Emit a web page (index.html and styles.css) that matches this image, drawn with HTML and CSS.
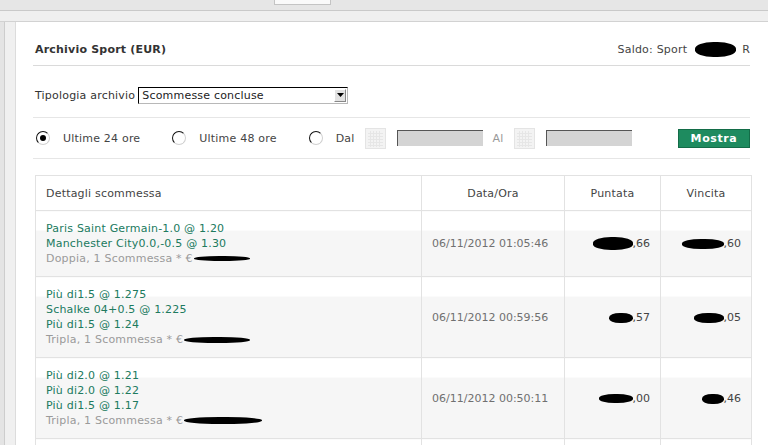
FILE: index.html
```html
<!DOCTYPE html>
<html lang="it">
<head>
    <meta charset="UTF-8">
    <meta name="viewport" content="width=device-width, initial-scale=1.0">
    <title>Archivio Sport</title>
    <link rel="stylesheet" href="styles.css">
</head>
<body>

    <div id="topbar">
        <div class="tab"></div>
    </div>
    <div id="subbar"></div>

    <div id="frame">
        <div class="panel">

            <div class="panel-head">
                <div class="title">Archivio Sport (EUR)</div>
                <div class="saldo">Saldo: Sport <span class="blot blot-saldo"></span>R</div>
            </div>

            <div class="filter-row">
                <label>Tipologia archivio</label>
                <div class="select">
                    <span>Scommesse concluse</span>
                    <span class="select-arrow">
                        <svg width="7" height="4" viewBox="0 0 7 4"><path d="M0 0h7L3.5 4z" fill="#000"/></svg>
                    </span>
                </div>
            </div>

            <div class="period-row">
                <span class="radio checked"></span>
                <span class="period-label">Ultime 24 ore</span>
                <span class="radio"></span>
                <span class="period-label">Ultime 48 ore</span>
                <span class="radio"></span>
                <span class="period-label dal">Dal</span>
                <span class="calendar">
                    <svg width="21" height="21" viewBox="0 0 21 21">
                        <rect x="0.5" y="0.5" width="20" height="20" fill="#f3f3f3" stroke="#e4e4e4"/>
                        <path d="M3 5.5h15M3 8.5h15M3 11.5h15M3 14.5h15M3 17.5h15M5.5 3v16M8.5 3v16M11.5 3v16M14.5 3v16" stroke="#e6e6e6" stroke-width="1"/>
                    </svg>
                </span>
                <span class="date-input"></span>
                <span class="period-label al">Al</span>
                <span class="calendar">
                    <svg width="21" height="21" viewBox="0 0 21 21">
                        <rect x="0.5" y="0.5" width="20" height="20" fill="#f3f3f3" stroke="#e4e4e4"/>
                        <path d="M3 5.5h15M3 8.5h15M3 11.5h15M3 14.5h15M3 17.5h15M5.5 3v16M8.5 3v16M11.5 3v16M14.5 3v16" stroke="#e6e6e6" stroke-width="1"/>
                    </svg>
                </span>
                <span class="date-input"></span>
                <button class="btn-show">Mostra</button>
            </div>

            <table class="bets">
                <colgroup>
                    <col class="col-details">
                    <col class="col-date">
                    <col class="col-stake">
                    <col class="col-win">
                </colgroup>
                <thead>
                    <tr>
                        <th class="head-details">Dettagli scommessa</th>
                        <th>Data/Ora</th>
                        <th>Puntata</th>
                        <th>Vincita</th>
                    </tr>
                </thead>
                <tbody>
                    <tr>
                        <td class="details">
                            <div class="pick">Paris Saint Germain-1.0 @ 1.20</div>
                            <div class="pick">Manchester City0.0,-0.5 @ 1.30</div>
                            <div class="kind">Doppia, 1 Scommessa * €<span class="blot blot-line1"></span></div>
                        </td>
                        <td class="date">06/11/2012 01:05:46</td>
                        <td class="amount"><span class="blot blot-a1"></span>,66</td>
                        <td class="amount"><span class="blot blot-b1"></span>,60</td>
                    </tr>
                    <tr>
                        <td class="details">
                            <div class="pick">Più di1.5 @ 1.275</div>
                            <div class="pick">Schalke 04+0.5 @ 1.225</div>
                            <div class="pick">Più di1.5 @ 1.24</div>
                            <div class="kind">Tripla, 1 Scommessa * €<span class="blot blot-line2"></span></div>
                        </td>
                        <td class="date">06/11/2012 00:59:56</td>
                        <td class="amount"><span class="blot blot-a2"></span>,57</td>
                        <td class="amount"><span class="blot blot-b2"></span>,05</td>
                    </tr>
                    <tr>
                        <td class="details">
                            <div class="pick">Più di2.0 @ 1.21</div>
                            <div class="pick">Più di2.0 @ 1.22</div>
                            <div class="pick">Più di1.5 @ 1.17</div>
                            <div class="kind">Tripla, 1 Scommessa * €<span class="blot blot-line3"></span></div>
                        </td>
                        <td class="date">06/11/2012 00:50:11</td>
                        <td class="amount"><span class="blot blot-a3"></span>,00</td>
                        <td class="amount"><span class="blot blot-b3"></span>,46</td>
                    </tr>
                    <tr>
                        <td class="details">&nbsp;</td>
                        <td></td>
                        <td></td>
                        <td></td>
                    </tr>
                </tbody>
            </table>

        </div>
    </div>

</body>
</html>
```

FILE: styles.css
```css
body {
    margin: 0;
    padding: 0;
    font-family: 'DejaVu Sans', Verdana, sans-serif;
    font-size: 11px;
    letter-spacing: 0.2px;
    color: #333;
    background-color: #e4e4e4;
    overflow: hidden;
}
#topbar {
    height: 10px;
    background-color: #e6e6e6;
    border-bottom: 1px solid #c9c9c9;
    position: relative;
}
#topbar .tab {
    position: absolute;
    left: 274px;
    top: -1px;
    width: 55px;
    height: 4px;
    background-color: #fafafa;
    border: 1px solid #c4c4c4;
}
#subbar {
    height: 10px;
    background-color: #efefef;
    border-bottom: 1px solid #d2d2d2;
}
#frame {
    margin-left: 4px;
    border-left: 1px solid #cdcdcd;
    background-color: #f0f0f0;
    padding-left: 10px;
}
.panel {
    background-color: #fff;
    border-left: 1px solid #dcdcdc;
    padding: 0 18px 0 17px;
    height: 430px;
}
.panel-head {
    display: flex;
    justify-content: space-between;
    align-items: center;
    box-sizing: border-box;
    height: 44px;
    padding-top: 11px;
    border-bottom: 1px solid #dadada;
}
.title {
    font-weight: bold;
    padding-left: 2px;
    color: #333;
}
.saldo {
    display: flex;
    align-items: center;
    color: #444;
}
.blot {
    display: inline-block;
    background-color: #000;
    border-radius: 45%;
}
.blot-saldo { width: 41px; height: 15px; margin: 0 6px 0 8px; }
.filter-row {
    display: flex;
    align-items: center;
    height: 52px;
    padding-top: 7px;
    box-sizing: border-box;
    padding-left: 2px;
    border-bottom: 1px solid #e6e6e6;
}
.filter-row label {
    margin-right: 3px;
    color: #333;
}
.select {
    display: flex;
    justify-content: space-between;
    align-items: center;
    width: 204px;
    height: 13px;
    border: 1px solid #b8b8b8;
    border-top-color: #000;
    border-left-color: #000;
    padding: 1px 1px 1px 3px;
    background-color: #fff;
    color: #222;
}
.select-arrow {
    display: flex;
    align-items: center;
    justify-content: center;
    width: 10px;
    height: 11px;
    background-color: #e2e2e2;
    border: 1px solid #888;
    border-top-color: #fff;
    border-left-color: #fff;
}
.period-row {
    display: flex;
    align-items: center;
    height: 40px;
    padding-left: 3px;
    border-bottom: 1px solid #e6e6e6;
}
.radio {
    width: 12px;
    height: 12px;
    border-radius: 50%;
    border: 1px solid #d0d0d0;
    border-top-color: #111;
    border-left-color: #111;
    position: relative;
    margin-right: 13px;
}
.radio.checked::after {
    content: '';
    position: absolute;
    left: 3px;
    top: 3px;
    width: 6px;
    height: 6px;
    border-radius: 50%;
    background-color: #000;
}
.period-label {
    color: #444;
    margin-right: 32px;
}
.period-label.dal { margin-right: 10px; }
.period-label.al { margin: 0 10px 0 10px; color: #999; }
.calendar {
    display: flex;
    margin-right: 11px;
}
.date-input {
    width: 85px;
    height: 15px;
    background-color: #d4d4d4;
    border-top: 1px solid #555;
    border-left: 1px solid #555;
}
.btn-show {
    margin-left: auto;
    width: 72px;
    height: 19px;
    padding: 0;
    background-color: #1e8b5f;
    border: 1px solid #136c48;
    color: #fff;
    font-family: inherit;
    font-size: 11px;
    font-weight: bold;
    letter-spacing: 0.6px;
}
.bets {
    margin: 16px 0 0 2px;
    width: 716px;
    table-layout: fixed;
    border-collapse: collapse;
}
.col-details { width: 386px; }
.col-date { width: 143px; }
.col-stake { width: 96px; }
.col-win { width: 91px; }
.bets th, .bets td {
    border: 1px solid #e2e2e2;
}
.bets th {
    height: 34px;
    padding: 0;
    font-weight: normal;
    color: #444;
    text-align: center;
}
.bets th.head-details {
    text-align: left;
    padding-left: 10px;
}
.bets tbody td {
    background: linear-gradient(#fff 19px, #f6f6f6 19px);
    vertical-align: middle;
}
.details {
    padding: 10px 10px 10px;
    line-height: 15px;
}
.pick { color: #207a5e; }
.kind { color: #9a9a9a; display: flex; align-items: center; }
.date {
    color: #707070;
    padding-left: 10px;
    letter-spacing: 0;
}
.amount {
    text-align: right;
    padding-right: 10px;
    color: #444;
    letter-spacing: 0;
}
.amount .blot { vertical-align: middle; }
.blot-line1 { width: 56px; height: 5px; margin-left: 1px; }
.blot-line2 { width: 66px; height: 6px; margin-left: 1px; }
.blot-line3 { width: 78px; height: 7px; margin-left: 1px; }
.blot-a1 { width: 40px; height: 13px; }
.blot-b1 { width: 42px; height: 10px; }
.blot-a2 { width: 24px; height: 10px; }
.blot-b2 { width: 30px; height: 10px; }
.blot-a3 { width: 34px; height: 9px; }
.blot-b3 { width: 22px; height: 10px; }
```
